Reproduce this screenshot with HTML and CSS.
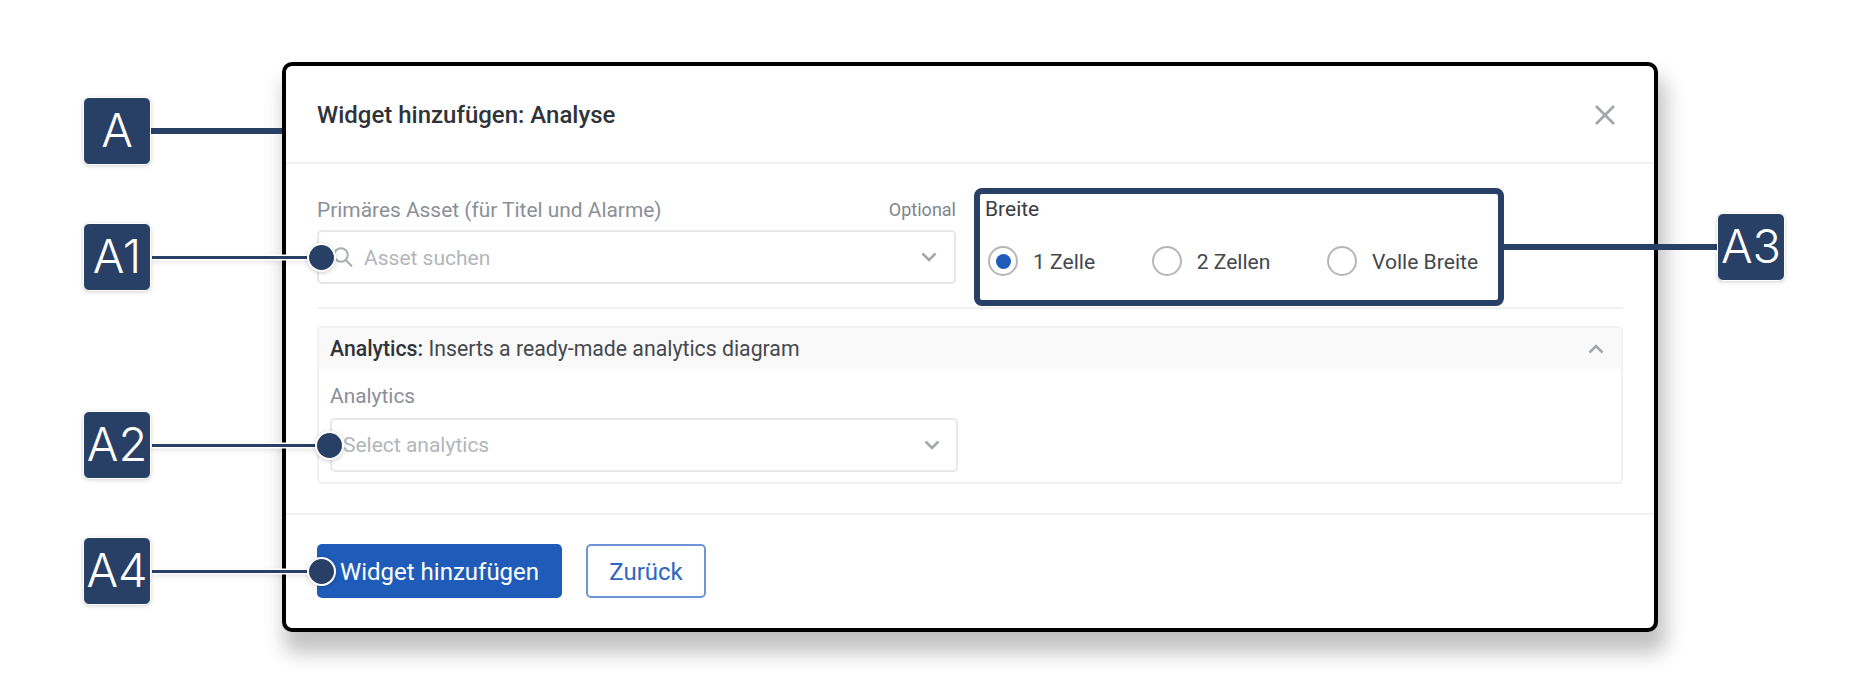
FILE: index.html
```html
<!doctype html>
<html>
  <head>
    <meta charset="utf-8">
    <title>Widget hinzufügen</title>
    <link rel="stylesheet" href="styles.css">
  </head>
  <body>
    <div class="dialog">
      <div class="dialog-head">
        <h2>Widget hinzufügen: Analyse</h2>
        <svg class="close" width="20" height="20" viewBox="0 0 20 20"><path d="M1 1 L19 19 M19 1 L1 19"/></svg>
      </div>
      <div class="top-row">
        <div class="asset-col">
          <div class="label-row">
            <span class="label">Primäres Asset (für Titel und Alarme)</span>
            <span class="optional">Optional</span>
          </div>
          <div class="select asset-select">
            <svg class="search" width="20" height="20" viewBox="0 0 20 20"><circle cx="8" cy="8" r="6.8"/><path d="M12.8 13 L19 19.5"/></svg>
            <span class="placeholder">Asset suchen</span>
            <svg class="chev" width="16" height="10" viewBox="0 0 16 10"><path d="M1.5 1.5 L8 8 L14.5 1.5"/></svg>
          </div>
        </div>
        <div class="width-col">
          <div class="width-label">Breite</div>
          <div class="radios">
            <div class="radio-item"><span class="radio on"></span>1 Zelle</div>
            <div class="radio-item"><span class="radio"></span>2 Zellen</div>
            <div class="radio-item"><span class="radio"></span>Volle Breite</div>
          </div>
        </div>
      </div>
      <div class="panel">
        <div class="panel-head">
          <span><b>Analytics:</b> Inserts a ready-made analytics diagram</span>
          <svg class="chev" width="16" height="10" viewBox="0 0 16 10"><path d="M1.5 8.5 L8 2 L14.5 8.5"/></svg>
        </div>
        <div class="panel-body">
          <div class="label">Analytics</div>
          <div class="select analytics-select">
            <span class="placeholder">Select analytics</span>
            <svg class="chev" width="16" height="10" viewBox="0 0 16 10"><path d="M1.5 1.5 L8 8 L14.5 1.5"/></svg>
          </div>
        </div>
      </div>
      <div class="dialog-foot">
        <button class="btn btn-primary">Widget hinzufügen</button>
        <button class="btn btn-ghost">Zurück</button>
      </div>
    </div>

    <!-- callouts -->
    <div class="frame-a3"></div>
    <div class="line thick line-a"></div>
    <div class="line thick line-a3"></div>
    <div class="line thin line-a1"></div>
    <div class="line thin line-a2"></div>
    <div class="line thin line-a4"></div>
    <div class="dot dot-a1"></div>
    <div class="dot dot-a2"></div>
    <div class="dot dot-a4"></div>
    <div class="badge badge-a">A</div>
    <div class="badge badge-a1">A1</div>
    <div class="badge badge-a2">A2</div>
    <div class="badge badge-a3">A3</div>
    <div class="badge badge-a4">A4</div>
  </body>
</html>
```

FILE: styles.css
```css
* {box-sizing:border-box;}
html, body {margin:0;height:100%;overflow:hidden;}
body {background:#fff;padding:62px 0 0 282px;font-family:Roboto, sans-serif;color:#3a3d42;}

.dialog {width:1376px;height:570px;background:#fff;border:4px solid #000;border-radius:10px;
  box-shadow:5px 18px 20px 3px rgba(0,0,0,.24);display:flex;flex-direction:column;}
.dialog-head {height:98px;flex:none;padding:2px 39px 0 31px;border-bottom:2px solid #f1f1f2;display:flex;align-items:center;justify-content:space-between;}
.dialog-head h2 {margin:0;font-size:24px;font-weight:500;color:#303338;}
.close path {stroke:#a3a6ab;stroke-width:2.8;fill:none;}

.top-row {flex:none;height:145px;margin:0 31px;border-bottom:2px solid #f1f1f2;display:flex;gap:30px;}
.asset-col {width:639px;padding-top:25px;}
.label-row {display:flex;justify-content:space-between;align-items:center;height:41px;}
.label {font-size:20.9px;color:#8b8f96;}
.optional {font-size:18px;color:#80848b;}
.select {height:54px;border:2px solid #e6e7e9;border-radius:5px;display:flex;align-items:center;font-size:21px;}
.placeholder {color:#b3b6ba;flex:1;}
.search {fill:none;stroke:#a9acb1;stroke-width:2;margin:0 11px 0 14px;}
.chev path {fill:none;stroke:#a3a6ab;stroke-width:2.6;}
.asset-select {padding-right:17px;}
.asset-select .placeholder {padding-top:1px;}
.width-col {padding:25px 0 0 0;}
.width-label {font-size:21px;color:#3a3d42;height:41px;line-height:41px;margin-left:-1px;}
.radios {display:flex;gap:56.5px;margin-top:16px;font-size:21.1px;padding-left:2px;}
.radio-item {display:flex;align-items:center;gap:15px;color:#44474c;}
.radio {width:30px;height:30px;border-radius:50%;border:2px solid #b4b6b9;background:#fff;display:flex;align-items:center;justify-content:center;}
.radio.on::after {content:"";width:15px;height:15px;border-radius:50%;background:#1f5bb8;}

.panel {flex:none;width:1306px;height:158px;margin:17px 0 0 31px;border:2px solid #f1f1f2;border-radius:5px;}
.panel-head {height:41px;background:#f9f9f9;padding:0 17px 0 11px;display:flex;align-items:center;justify-content:space-between;font-size:21.25px;color:#45484d;}
.panel-head b {font-weight:500;color:#303338;}
.panel-body {padding:11px 11px;}
.panel-body .label {height:38px;line-height:32px;}
.analytics-select {width:628px;padding:0 16px 0 11px;}

.dialog-foot {flex:1;margin-top:29px;border-top:2px solid #f1f1f2;padding:29px 31px 0;display:flex;gap:24px;align-items:flex-start;}
.btn {height:54px;font-family:Roboto, sans-serif;font-size:24px;border-radius:5px;padding:2px 0 0;}
.btn-primary {width:245px;background:#1f5bb8;border:0;color:#fff;}
.btn-ghost {width:120px;background:#fff;border:2px solid #6d94d6;color:#2f66bf;}

/* callouts are drawn over the page */
.frame-a3 {position:absolute;left:974px;top:188px;width:530px;height:118px;border:6px solid #283f66;border-radius:8px;}
.line {position:absolute;background:#283f66;}
.line.thick {height:6px;}
.line.thin {height:3px;box-shadow:0 0 0 1.5px #fff, 0 2px 5px 1px rgba(0,0,0,.12);}
.line-a {left:150px;top:128px;width:132px;}
.line-a3 {left:1504px;top:244px;width:214px;}
.line-a1 {left:152px;top:256px;width:170px;}
.line-a2 {left:152px;top:444px;width:178px;}
.line-a4 {left:152px;top:570px;width:170px;}
.dot {position:absolute;width:29px;height:29px;border-radius:50%;background:#283f66;border:2px solid #fff;box-shadow:0 1px 4px rgba(0,0,0,.2);}
.dot-a1 {left:307px;top:243px;}
.dot-a2 {left:315px;top:431px;}
.dot-a4 {left:307px;top:557px;}
.badge {position:absolute;width:68px;height:68px;background:#283f66;border:1.5px solid #fff;border-radius:6px;box-shadow:0 1px 4px rgba(0,0,0,.18);
  color:#fff;font-family:Inter, sans-serif;font-size:47px;font-weight:300;line-height:63px;text-align:center;}
.badge-a {left:83px;top:97px;}
.badge-a1 {left:83px;top:223px;}
.badge-a2 {left:83px;top:411px;}
.badge-a4 {left:83px;top:537px;}
.badge-a3 {left:1717px;top:213px;}
```
